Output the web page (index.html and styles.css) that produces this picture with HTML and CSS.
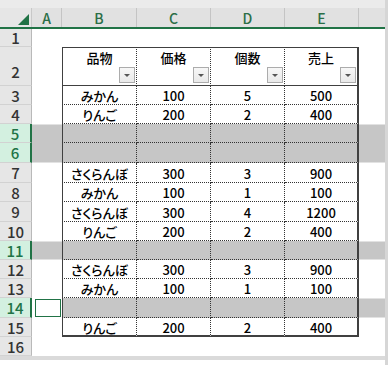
FILE: index.html
```html
<!DOCTYPE html>
<html lang="ja">
<head>
<meta charset="utf-8">
<link rel="stylesheet" href="styles.css">
</head>
<body>
<div class="window">
  <div class="topstrip"></div>
  <div class="sheet">
    <div class="row colhead">
      <div class="corner"><span class="tri"></span></div>
      <div class="ch ca">A</div>
      <div class="ch cb">B</div>
      <div class="ch cc">C</div>
      <div class="ch cd">D</div>
      <div class="ch ce">E</div>
      <div class="ch cf"></div>
    </div>

    <div class="row h18">
      <div class="rh">1</div><div class="ca"></div><div class="cb"></div><div class="cc"></div><div class="cd"></div><div class="ce"></div><div class="cf"></div>
    </div>

    <div class="row h39">
      <div class="rh rh-bottom">2</div>
      <div class="ca"></div>
      <div class="cb t th">品物<span class="flt"><i></i></span></div>
      <div class="cc t th">価格<span class="flt"><i></i></span></div>
      <div class="cd t th">個数<span class="flt"><i></i></span></div>
      <div class="ce t th">売上<span class="flt"><i></i></span></div>
      <div class="cf"></div>
    </div>

    <div class="row h19">
      <div class="rh">3</div><div class="ca"></div>
      <div class="cb t">みかん</div><div class="cc t">100</div><div class="cd t">5</div><div class="ce t">500</div><div class="cf"></div>
    </div>
    <div class="row h19">
      <div class="rh">4</div><div class="ca"></div>
      <div class="cb t">りんご</div><div class="cc t">200</div><div class="cd t">2</div><div class="ce t">400</div><div class="cf"></div>
    </div>
    <div class="row h19 sel sel-top">
      <div class="rh">5</div><div class="ca"></div>
      <div class="cb t"></div><div class="cc t"></div><div class="cd t"></div><div class="ce t"></div><div class="cf"></div>
    </div>
    <div class="row h20 sel sel-bot">
      <div class="rh">6</div><div class="ca"></div>
      <div class="cb t"></div><div class="cc t"></div><div class="cd t"></div><div class="ce t"></div><div class="cf"></div>
    </div>
    <div class="row h20">
      <div class="rh">7</div><div class="ca"></div>
      <div class="cb t">さくらんぼ</div><div class="cc t">300</div><div class="cd t">3</div><div class="ce t">900</div><div class="cf"></div>
    </div>
    <div class="row h19">
      <div class="rh">8</div><div class="ca"></div>
      <div class="cb t">みかん</div><div class="cc t">100</div><div class="cd t">1</div><div class="ce t">100</div><div class="cf"></div>
    </div>
    <div class="row h20">
      <div class="rh">9</div><div class="ca"></div>
      <div class="cb t">さくらんぼ</div><div class="cc t">300</div><div class="cd t">4</div><div class="ce t">1200</div><div class="cf"></div>
    </div>
    <div class="row h19">
      <div class="rh">10</div><div class="ca"></div>
      <div class="cb t">りんご</div><div class="cc t">200</div><div class="cd t">2</div><div class="ce t">400</div><div class="cf"></div>
    </div>
    <div class="row h19 sel sel-top sel-bot">
      <div class="rh">11</div><div class="ca"></div>
      <div class="cb t"></div><div class="cc t"></div><div class="cd t"></div><div class="ce t"></div><div class="cf"></div>
    </div>
    <div class="row h19">
      <div class="rh">12</div><div class="ca"></div>
      <div class="cb t">さくらんぼ</div><div class="cc t">300</div><div class="cd t">3</div><div class="ce t">900</div><div class="cf"></div>
    </div>
    <div class="row h19">
      <div class="rh">13</div><div class="ca"></div>
      <div class="cb t">みかん</div><div class="cc t">100</div><div class="cd t">1</div><div class="ce t">100</div><div class="cf"></div>
    </div>
    <div class="row h20 sel sel-top sel-bot">
      <div class="rh">14</div><div class="ca active"></div>
      <div class="cb t"></div><div class="cc t"></div><div class="cd t"></div><div class="ce t"></div><div class="cf"></div>
    </div>
    <div class="row h19">
      <div class="rh">15</div><div class="ca"></div>
      <div class="cb t tb">りんご</div><div class="cc t tb">200</div><div class="cd t tb">2</div><div class="ce t tb">400</div><div class="cf"></div>
    </div>
    <div class="row h19">
      <div class="rh">16</div><div class="ca"></div><div class="cb"></div><div class="cc"></div><div class="cd"></div><div class="ce"></div><div class="cf"></div>
    </div>
  </div>
  <div class="bottomstrip"></div>
</div>
</body>
</html>
```

FILE: styles.css
```css
* { box-sizing: border-box; }
html, body { margin: 0; padding: 0; background: #ffffff; }
body {
  width: 388px;
  height: 365px;
  overflow: hidden;
  font-family: "Noto Sans CJK JP", "Noto Sans", sans-serif;
  font-feature-settings: "palt";
  color: #000;
}
.window {
  width: 388px;
  height: 365px;
  border-right: 3px solid #d6d6d6;
  background: #fff;
}
.topstrip { height: 8px; background: #ebebeb; }
.bottomstrip { height: 8px; background: #fff; border-top: 4px solid #dadada; }
.sheet { display: flex; flex-direction: column; }
.row { display: flex; }
.h18 { height: 18px; }
.h19 { height: 19px; }
.h20 { height: 20px; }
.h39 { height: 39px; }

.colhead { height: 21px; background: #e1e1e1; border-bottom: 2px solid #217346; }
.corner {
  width: 32px;
  background: #e6e6e6;
  border-right: 1px solid #c8c8c8;
  display: flex;
  align-items: flex-end;
  justify-content: flex-end;
  padding: 0 2px 2px 0;
}
.tri {
  width: 0; height: 0;
  border-left: 11px solid transparent;
  border-bottom: 11px solid #217346;
}
.ch {
  display: flex;
  align-items: center;
  justify-content: center;
  font-size: 14px;
  font-weight: 500;
  color: #2b6e47;
  border-right: 1px solid #c4c4c4;
  padding-top: 1px;
}
.ch.cf { border-right: none; }

.rh {
  width: 32px;
  flex: none;
  background: #e6e6e6;
  border-right: 1px solid #b9b9b9;
  border-bottom: 1px solid #d2d2d2;
  display: flex;
  align-items: center;
  justify-content: center;
  font-size: 15px;
  font-weight: 500;
  color: #333;
}
.rh-bottom { align-items: flex-end; padding-bottom: 3px; }
.ca { width: 30px; flex: none; }
.cb { width: 75px; flex: none; }
.cc { width: 74px; flex: none; }
.cd { width: 74px; flex: none; }
.ce { width: 74px; flex: none; }
.cf { width: 26px; flex: none; }

.t {
  display: flex;
  align-items: center;
  justify-content: center;
  font-size: 13px;
  font-weight: 500;
  padding-top: 1px;
  border-right: 1px dotted #333;
  border-bottom: 1px dotted #333;
}
.cb.t { border-left: 1px solid #404040; }
.ce.t { border-right: 2px solid #404040; }
.tb { border-bottom: 2px solid #404040; }

.th {
  flex-direction: column;
  justify-content: flex-start;
  padding: 1px 0 2px 0;
  border-top: 1px solid #404040;
  border-bottom: 1px solid #404040;
  line-height: 18px;
}
.flt {
  margin-top: auto;
  align-self: flex-end;
  width: 16px;
  height: 16px;
  margin-right: 1px;
  background: linear-gradient(#f7f7f7, #e9e9e9);
  border: 1px solid #acacac;
  display: flex;
  align-items: center;
  justify-content: center;
}
.flt i {
  width: 0; height: 0;
  border-left: 3px solid transparent;
  border-right: 3px solid transparent;
  border-top: 3px solid #555;
}

.sel .rh {
  background: #d3f0e0;
  color: #217346;
  border-right: 2px solid #217346;
}
.sel .ca, .sel .cf, .sel .t { background: #c6c6c6; }
.sel-top .ca, .sel-top .cf { border-top: 1px solid #e2e2e2; }
.sel-bot .ca, .sel-bot .cf { border-bottom: 1px solid #e2e2e2; }
.sel .ca.active {
  background: #fff;
  border: 1px solid #217346;
  margin: 1px 1px 1px 3px;
  width: 26px;
}
```
